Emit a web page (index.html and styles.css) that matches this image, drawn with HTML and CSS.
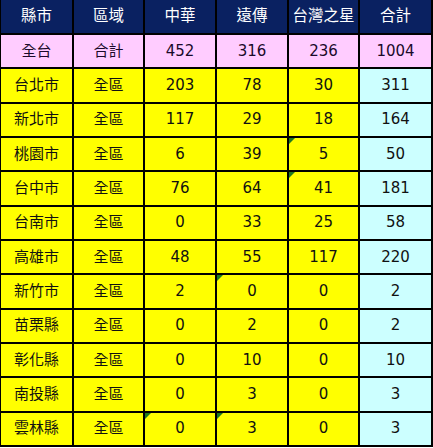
FILE: index.html
```html
<!DOCTYPE html>
<html lang="zh-Hant">
<head>
<meta charset="utf-8">
<link rel="stylesheet" href="styles.css">
</head>
<body>
<div class="sheet">
  <div class="c hd">縣市</div><div class="c hd">區域</div><div class="c hd">中華</div><div class="c hd">遠傳</div><div class="c hd">台灣之星</div><div class="c hd">合計</div>
  <div class="c pk">全台</div><div class="c pk">合計</div><div class="c pk">452</div><div class="c pk">316</div><div class="c pk">236</div><div class="c pk">1004</div>
  <div class="c y">台北市</div><div class="c y">全區</div><div class="c y">203</div><div class="c y">78</div><div class="c y">30</div><div class="c cy">311</div>
  <div class="c y">新北市</div><div class="c y">全區</div><div class="c y">117</div><div class="c y">29</div><div class="c y">18</div><div class="c cy">164</div>
  <div class="c y">桃園市</div><div class="c y">全區</div><div class="c y">6</div><div class="c y">39</div><div class="c y mark">5</div><div class="c cy">50</div>
  <div class="c y">台中市</div><div class="c y">全區</div><div class="c y">76</div><div class="c y">64</div><div class="c y mark">41</div><div class="c cy">181</div>
  <div class="c y">台南市</div><div class="c y">全區</div><div class="c y">0</div><div class="c y">33</div><div class="c y">25</div><div class="c cy">58</div>
  <div class="c y">高雄市</div><div class="c y">全區</div><div class="c y">48</div><div class="c y">55</div><div class="c y">117</div><div class="c cy">220</div>
  <div class="c y">新竹市</div><div class="c y">全區</div><div class="c y">2</div><div class="c y mark">0</div><div class="c y">0</div><div class="c cy">2</div>
  <div class="c y">苗栗縣</div><div class="c y">全區</div><div class="c y">0</div><div class="c y">2</div><div class="c y">0</div><div class="c cy">2</div>
  <div class="c y">彰化縣</div><div class="c y">全區</div><div class="c y">0</div><div class="c y">10</div><div class="c y">0</div><div class="c cy">10</div>
  <div class="c y">南投縣</div><div class="c y">全區</div><div class="c y">0</div><div class="c y">3</div><div class="c y">0</div><div class="c cy">3</div>
  <div class="c y">雲林縣</div><div class="c y">全區</div><div class="c y mark">0</div><div class="c y mark">3</div><div class="c y">0</div><div class="c cy">3</div>
</div>
</body>
</html>
```
FILE: styles.css
```css
html, body {
  margin: 0;
  padding: 0;
  background: #ffffff;
}
.sheet {
  width: 433px;
  height: 447px;
  box-sizing: border-box;
  display: grid;
  grid-template-columns: 71px 69px 70px 70px 69px 71px;
  grid-template-rows: 33px repeat(12, 1fr);
  gap: 2px;
  padding: 0 2px 2px 1px;
  background: #000000;
  font-family: "DejaVu Sans", "Noto Sans CJK TC", sans-serif;
  font-size: 15px;
  color: #111111;
}
.c {
  display: flex;
  align-items: center;
  justify-content: center;
  position: relative;
  line-height: 1;
}
.hd {
  background: #0a2161;
  color: #ffffff;
  font-size: 15.5px;
}
.pk {
  background: #ffccff;
  color: #1a0a2a;
}
.y {
  background: #ffff00;
}
.cy {
  background: #ccffff;
}
.mark::before {
  content: "";
  position: absolute;
  left: 0;
  top: 0;
  width: 0;
  height: 0;
  border-top: 6px solid #1f7a1f;
  border-right: 6px solid transparent;
}
```
